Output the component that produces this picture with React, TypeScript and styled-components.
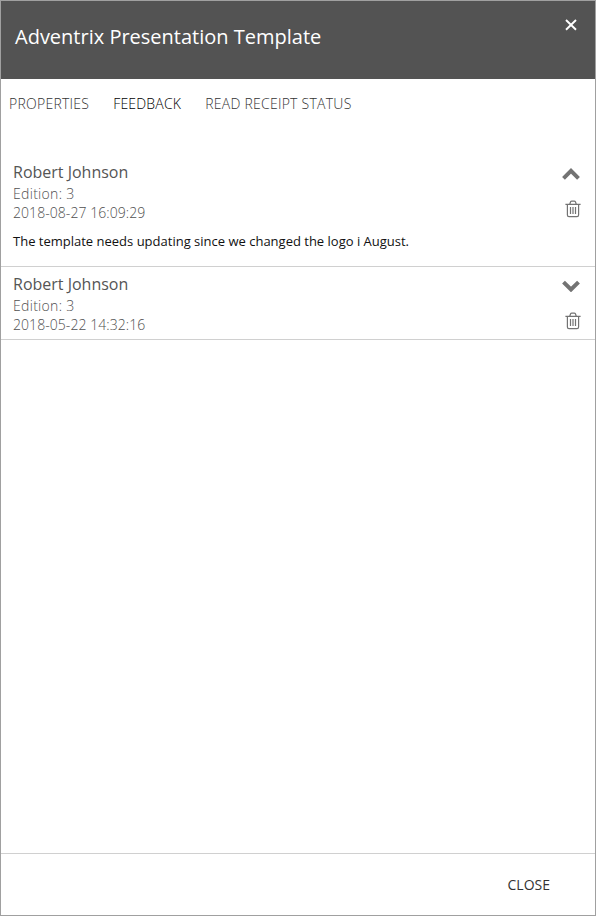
import React from "react";
import styled, { createGlobalStyle } from "styled-components";

const GlobalStyle = createGlobalStyle`
  *, *::before, *::after { box-sizing: border-box; }
  body { margin: 0; font-family: "Open Sans", "Noto Sans", sans-serif; background: #fff; }
`;

const Dialog = styled.main`
  display: flex;
  flex-direction: column;
  height: 916px;
  width: 596px;
  border: 1px solid #a0a0a0;
  background: #fff;
  overflow: hidden;
`;

const Header = styled.header`
  display: flex;
  justify-content: space-between;
  height: 78px;
  flex: none;
  padding: 0 18px 0 14px;
  background: #535353;
  color: #fff;
`;

const Title = styled.h1`
  margin: 22px 0 0;
  font-size: 20px;
  line-height: 28px;
  font-weight: 400;
  white-space: nowrap;
`;

const IconButton = styled.button`
  display: block;
  padding: 0;
  border: 0;
  background: none;
  color: inherit;
  line-height: 0;
`;

const DismissButton = styled(IconButton)`
  align-self: flex-start;
  margin-top: 18px;
`;

const Tabs = styled.nav`
  display: flex;
  flex: none;
  gap: 24px;
  height: 76px;
  padding: 15px 8px 0;
`;

const Tab = styled.a<{ $active?: boolean }>`
  font-size: 14px;
  line-height: 20px;
  font-weight: ${(p) => (p.$active ? 350 : 300)};
  letter-spacing: ${(p) => (p.$active ? 0.2 : 0.25)}px;
  color: ${(p) => (p.$active ? "#000" : "#333")};
  white-space: nowrap;
`;

const List = styled.section`
  flex: 1;
`;

const Entry = styled.article<{ $height: number }>`
  display: flex;
  justify-content: space-between;
  height: ${(p) => p.$height}px;
  padding: 5px 14px 0 12px;
  border-bottom: 1px solid #d0d0d0;
`;

const Author = styled.h2`
  margin: 0;
  font-size: 16px;
  line-height: 24px;
  font-weight: 400;
  color: #555;
`;

const Meta = styled.div<{ $spacing: number }>`
  font-size: 14px;
  line-height: 19px;
  font-weight: 300;
  letter-spacing: ${(p) => p.$spacing}px;
  color: #505050;
`;

const Comment = styled.p`
  margin: 10px 0 0;
  font-size: 13px;
  line-height: 18px;
  color: #111;
`;

const Actions = styled.div`
  display: flex;
  flex-direction: column;
  align-items: flex-end;
  gap: 20px;
  padding-top: 8px;
  color: #737373;
`;

const Footer = styled.footer`
  display: flex;
  flex: none;
  justify-content: flex-end;
  align-items: center;
  height: 62px;
  padding-right: 45px;
  border-top: 1px solid #d0d0d0;
`;

const CloseButton = styled.button`
  padding: 0;
  border: 0;
  background: none;
  font: 400 14px/20px "Open Sans", "Noto Sans", sans-serif;
  color: #333;
`;

const Chevron = ({ up }: { up?: boolean }) => (
  <svg width="20" height="12" viewBox="0 0 20 12">
    <path d={up ? "M2.5 10.3 L10 2.9 L17.5 10.3" : "M2.5 2.1 L10 9.5 L17.5 2.1"} fill="none" stroke="currentColor" strokeWidth="4" />
  </svg>
);

const Trash = () => (
  <svg width="16" height="18" viewBox="0 0 16 18" fill="none" stroke="currentColor" strokeWidth="1.2">
    <path d="M.4 4.3H15.6M4.8 4L5.6 1.8Q5.9 1.1 6.8 1.1H9.2Q10.1 1.1 10.4 1.8L11.2 4M2.4 4.3V14.9Q2.4 16.6 4 16.6H12Q13.6 16.6 13.6 14.9V4.3M5.5 7V14M8 7V14M10.5 7V14" />
  </svg>
);

const entries = [
  { author: "Robert Johnson", edition: 3, time: "2018-08-27 16:09:29", comment: "The template needs updating since we changed the logo i August.", height: 112 },
  { author: "Robert Johnson", edition: 3, time: "2018-05-22 14:32:16", height: 73 },
];

export default function App() {
  return (
    <>
      <GlobalStyle />
      <Dialog>
        <Header>
          <Title>Adventrix Presentation Template</Title>
          <DismissButton aria-label="Dismiss">
            <svg width="12" height="12" viewBox="0 0 12 12">
              <path d="M1 1L11 10.8M11 1L1 10.8" stroke="currentColor" strokeWidth="1.9" />
            </svg>
          </DismissButton>
        </Header>
        <Tabs>
          <Tab>PROPERTIES</Tab>
          <Tab $active>FEEDBACK</Tab>
          <Tab>READ RECEIPT STATUS</Tab>
        </Tabs>
        <List>
          {entries.map((e) => (
            <Entry key={e.time} $height={e.height}>
              <div>
                <Author>{e.author}</Author>
                <Meta $spacing={0.3}>Edition: {e.edition}</Meta>
                <Meta $spacing={0.06}>{e.time}</Meta>
                {e.comment && <Comment>{e.comment}</Comment>}
              </div>
              <Actions>
                <IconButton aria-label="Toggle comment"><Chevron up={!!e.comment} /></IconButton>
                <IconButton aria-label="Delete"><Trash /></IconButton>
              </Actions>
            </Entry>
          ))}
        </List>
        <Footer><CloseButton>CLOSE</CloseButton></Footer>
      </Dialog>
    </>
  );
}
